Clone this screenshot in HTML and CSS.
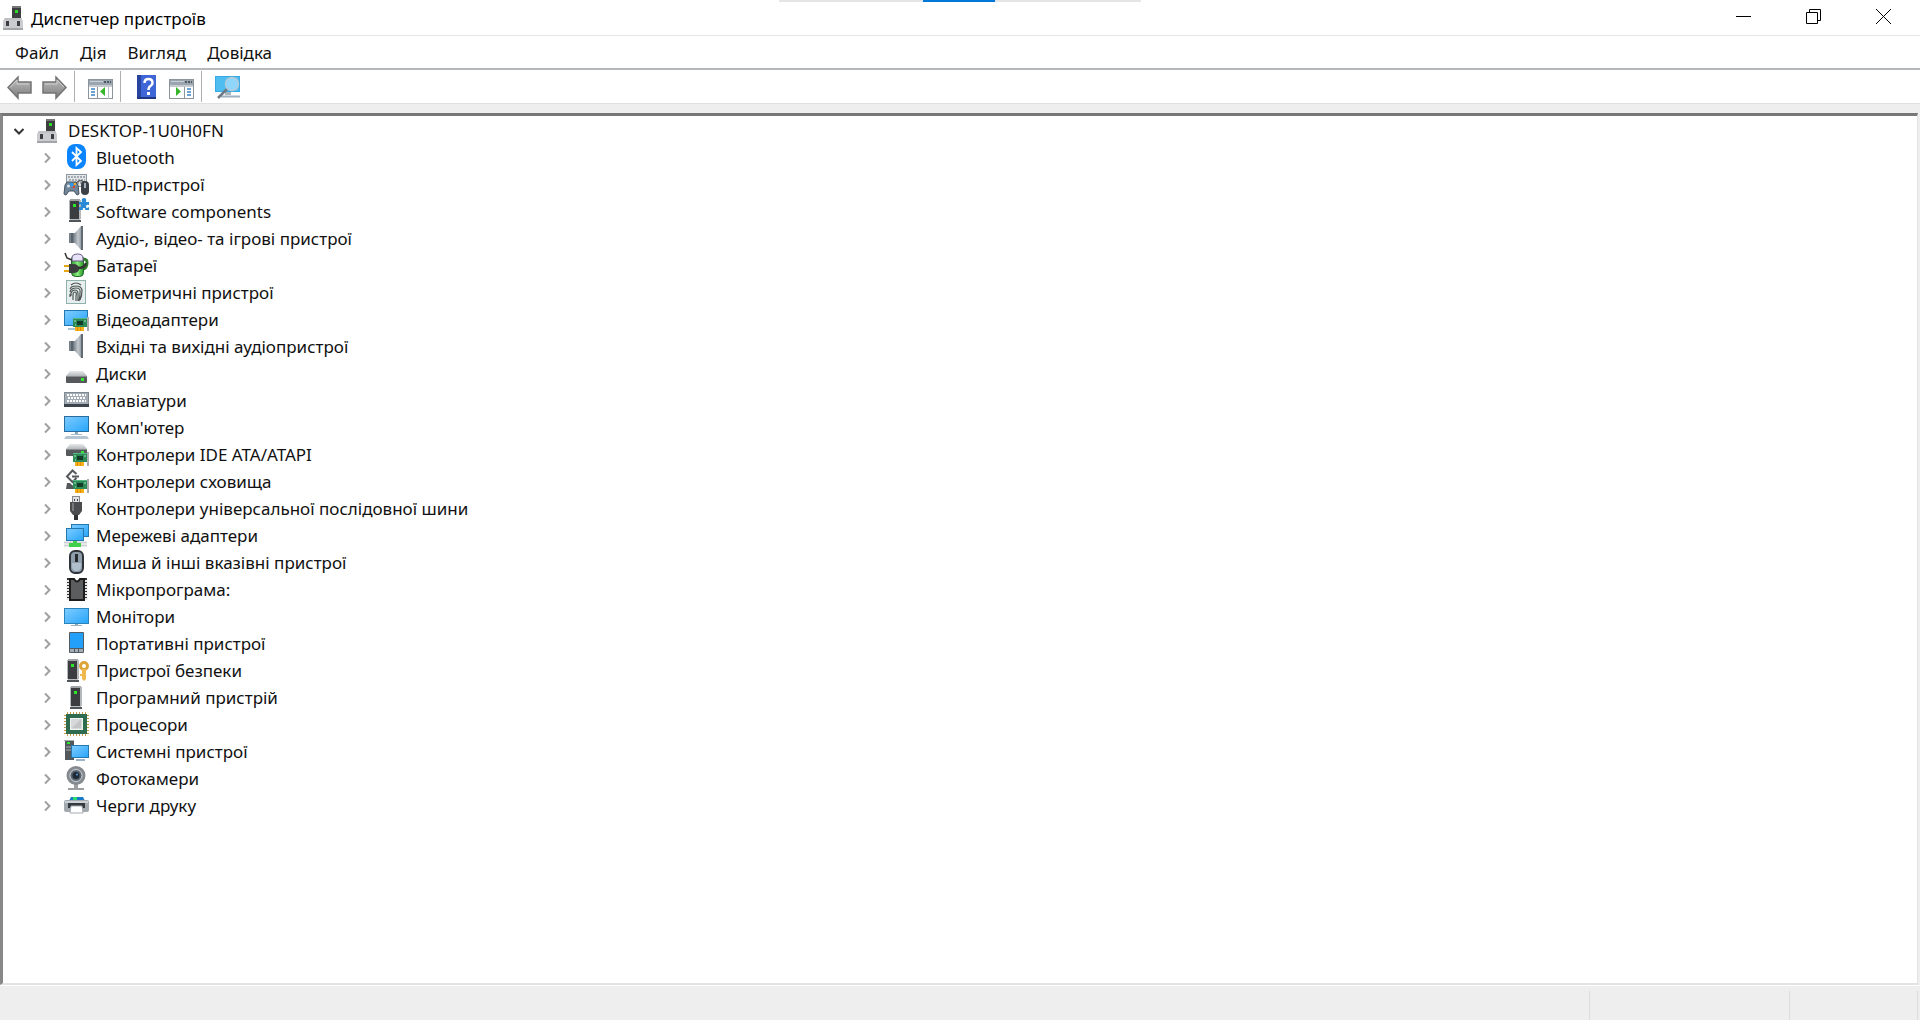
FILE: index.html
```html
<!DOCTYPE html>
<html lang="uk">
<head>
  <meta charset="UTF-8" />
  <meta name="viewport" content="width=device-width, initial-scale=1.0" />
  <title>Диспетчер пристроїв</title>
  <link rel="stylesheet" href="styles.css">
</head>
<body>
  <!-- Shared icon parts -->
  <svg class="defs" aria-hidden="true">
    <defs>
      <linearGradient id="blue" x1="0" y1="0" x2="1" y2="1"><stop offset="0" stop-color="#7fccff"/><stop offset="1" stop-color="#27a5fa"/></linearGradient>
      <linearGradient id="metal" x1="0" y1="0" x2="1" y2="0"><stop offset="0" stop-color="#6b757e"/><stop offset=".5" stop-color="#c3c9ce"/><stop offset="1" stop-color="#7b848c"/></linearGradient>
      <linearGradient id="gray" x1="0" y1="0" x2="0" y2="1"><stop offset="0" stop-color="#c0c0c0"/><stop offset="1" stop-color="#7d7d7d"/></linearGradient>
      <linearGradient id="light" x1="0" y1="0" x2="0" y2="1"><stop offset="0" stop-color="#e8eaeb"/><stop offset="1" stop-color="#b4b8bb"/></linearGradient>
      <linearGradient id="green" x1="0" y1="0" x2="1" y2="0"><stop offset="0" stop-color="#2c9a2c"/><stop offset=".5" stop-color="#8cec7e"/><stop offset="1" stop-color="#239323"/></linearGradient>
      <symbol id="arrow" viewBox="0 0 12 12"><path d="M3 1.500L7.500 6 3 10.500"/></symbol>
      <symbol id="root" viewBox="0 0 20 24">
        <rect x="9" y="0" width="9" height="13" fill="#3c3e40"/><rect x="9" y="0" width="9" height="2" fill="#777"/>
        <rect x="12" y="4" width="3" height="3" fill="#2bdc2b"/>
        <path d="M2 12h16l2 3v9H0v-9z" fill="#cbccd0"/><path d="M0 22h20v2H0z" fill="#a4a5a9"/><path d="M1 13h18" stroke="#b4b5b9"/>
        <rect x="3" y="15" width="3" height="5" fill="#3c3e42"/><rect x="14" y="15" width="3" height="5" fill="#3c3e42"/>
      </symbol>
      <symbol id="tower" viewBox="0 0 12 23">
        <path d="M1 0h10v20H1z" fill="#3b3d40"/><path d="M1 0h10v2H1z" fill="#a0a4a7"/><path d="M0 1h1v19H0zM10 1h2v19h-2z" fill="#b5b8ba"/>
        <rect x="4" y="5" width="3" height="3" fill="#29e629"/><path d="M1 20h10v1H1z" fill="#b8bcbe"/><path d="M0 21h12v2H0z" fill="#50555a"/>
      </symbol>
      <symbol id="card" viewBox="0 0 16 14">
        <path d="M14 0h2v14h-2z" fill="#a9adaf"/><rect x="0" y="1" width="14" height="9" fill="#2c8a57"/><path d="M0 1h14v1H0z" fill="#56b585"/>
        <rect x="4" y="4" width="6" height="4" fill="#123c28"/><path d="M2 3v2M12 3v2M2 8h1" stroke="#a9e0c1"/>
        <path d="M2 10h9v4H2z" fill="#f8b01a"/><path d="M4.500 10v4M7.500 10v4" stroke="#e08f00"/>
      </symbol>
      <symbol id="drive" viewBox="0 0 21 12">
        <path d="M4 0h13l4 5H0z" fill="url(#light)"/><rect x="0" y="5" width="21" height="7" rx="1" fill="#55595c"/>
        <path d="M1 5.500h19" stroke="#8a8e91"/><rect x="15" y="7" width="3" height="3" fill="#37e637"/>
      </symbol>
      <symbol id="speaker" viewBox="0 0 25 25">
        <path d="M5 7h6v10H5z" fill="#78828b"/><path d="M7 7h3v10H7z" fill="#59636c"/>
        <path d="M9 7h2l6-7h2v24h-2l-6-7H9z" fill="url(#metal)"/><path d="M18 0v24" stroke="#626b74" stroke-width="2"/>
      </symbol>
      <symbol id="panel" viewBox="0 0 25 20">
        <rect x=".5" y=".5" width="24" height="19" fill="#fff" stroke="#8b959e"/><path d="M1 1h23v5H1z" fill="#9aa5af"/>
        <path d="M2 2.500h13" stroke="#c8d0d7"/><path d="M16 3h2M19 3h2M22 3h1" stroke="#4d5963" stroke-width="2"/>
        <path d="M1 7h23" stroke="#c4cacf" stroke-width="2"/>
      </symbol>
    </defs>
  </svg>

  <div class="snap-tabs"><span></span></div>

  <header class="titlebar">
    <svg class="root-icon"><use href="#root"/></svg>
    <h1>Диспетчер пристроїв</h1>
    <div class="window-buttons">
      <button aria-label="Згорнути"><svg viewBox="0 0 15 15"><path d="M0 7.500h15"/></svg></button>
      <button aria-label="Відновити"><svg viewBox="0 0 15 15"><path d="M.5 3.500h11v11H.5zM3.500 3V.5h11v11H12"/></svg></button>
      <button aria-label="Закрити"><svg viewBox="0 0 15 15"><path d="M0 0l15 15M15 0L0 15"/></svg></button>
    </div>
  </header>

  <nav class="menu">
    <button>Файл</button>
    <button>Дія</button>
    <button>Вигляд</button>
    <button>Довідка</button>
  </nav>

  <div class="toolbar">
    <div class="group">
      <button aria-label="Назад"><svg viewBox="0 0 25 25"><path d="M1 12.500L11 2v5h13v11H11v5z" fill="url(#gray)" stroke="#747474" stroke-width="1.500"/><path d="M3 12.500L10 5v4h12" fill="none" stroke="#cfcfcf"/></svg></button>
      <button aria-label="Вперед"><svg viewBox="0 0 25 25"><path d="M24 12.500L14 2v5H1v11h13v5z" fill="url(#gray)" stroke="#747474" stroke-width="1.500"/><path d="M3 9h12V5l7 7" fill="none" stroke="#cfcfcf"/></svg></button>
    </div>
    <div class="group">
      <button aria-label="Дерево консолі"><svg viewBox="0 0 25 25"><use href="#panel" y="4" width="25" height="20"/><path d="M9.500 12v12" stroke="#8b959e"/><path d="M3 14h4M3 17h4M3 20h4" stroke="#3c82c4" stroke-width="1.500"/><path d="M17 12v9l-5-4.500z" fill="#35b528"/><path d="M20.500 12v12" stroke="#b9c1c8"/></svg></button>
    </div>
    <div class="group">
      <button aria-label="Довідка"><svg viewBox="0 0 25 25"><rect x="3" y="0" width="19" height="24" fill="#3f66d6"/><path d="M3 0h4v24H3z" fill="#27459f"/><path d="M3 22h19v2H3z" fill="#1e3780"/><path d="M10.500 8q0-4 4-4t4 4q0 2-2 3t-2 4" fill="none" stroke="#fff" stroke-width="2.500"/><path d="M13 17h3v3h-3z" fill="#fff"/></svg></button>
      <button aria-label="Панель дій"><svg viewBox="0 0 25 25"><use href="#panel" y="4" width="25" height="20"/><path d="M15.500 12v12" stroke="#8b959e"/><path d="M18 14h4M18 17h4M18 20h4" stroke="#3c82c4" stroke-width="1.500"/><path d="M7 12v9l5-4.500z" fill="#35b528"/></svg></button>
    </div>
    <div class="group">
      <button aria-label="Оновити конфігурацію обладнання"><svg viewBox="0 0 25 25"><path d="M0 1h25v16H0z" fill="#36a9e6"/><path d="M1 2h23v14H1z" fill="#4fbdf0"/><path d="M10 17h6v3h-6z" fill="#aab4bb"/><path d="M6 21.500h19" stroke="#9fb0bc" stroke-width="2"/><path d="M12 14l-9 9" stroke="#6f7b84" stroke-width="2.500"/><circle cx="17" cy="9" r="6.500" fill="#8fd6fa" stroke="#b5cbd9" stroke-width="1.500"/></svg></button>
    </div>
  </div>

  <main class="tree">
    <div class="row root-row">
      <svg class="arrow" viewBox="0 0 12 12"><path d="M1.500 4L6 8.500 10.500 4"/></svg>
      <svg class="root-icon"><use href="#root"/></svg>
      <span>DESKTOP-1U0H0FN</span>
    </div>
    <ul>
      <li class="row"><svg class="arrow"><use href="#arrow"/></svg><svg class="icon" viewBox="0 0 25 25"><rect x="3" y="-1" width="19" height="25" rx="8" fill="#0a84ff"/><path d="M8 7l9 9-4.500 4V3L17 7l-9 9" fill="none" stroke="#fff" stroke-width="1.800"/></svg><span>Bluetooth</span></li>
      <li class="row"><svg class="arrow"><use href="#arrow"/></svg><svg class="icon" viewBox="0 0 25 25"><rect x="2.500" y="2.500" width="20" height="12" fill="#e4e7ea" stroke="#8d979f"/><path d="M4 5h17M5 8h16M4 11h17" stroke="#8d979f" stroke-width="1.500" stroke-dasharray="2 1"/><path d="M3 10h9l2 3 1 9-2 1-3-4H5l-3 4-2-1 1-9z" fill="#71869a" stroke="#46525e"/><circle cx="4.500" cy="14" r="1.500" fill="#d7e4ef"/><path d="M6 11h3v3H6z" fill="#2a9af0"/><path d="M10 11h2v2h-2z" fill="#f0a726"/><path d="M9 14h2v2H9z" fill="#e64426"/><path d="M12 11q4-4 8-1" fill="none" stroke="#333"/><rect x="17" y="9" width="8" height="14" rx="4" fill="#3b4147"/><path d="M21 11v5" stroke="#a9b5c0" stroke-width="2"/></svg><span>HID-пристрої</span></li>
      <li class="row"><svg class="arrow"><use href="#arrow"/></svg><svg class="icon" viewBox="0 0 25 25"><use href="#tower" x="5" width="12" height="23"/><path d="M15 3h3q-1-4 2-4t2 4h3v3q-3-1-3 1.500T25 8v3h-4q1-2-1-2t-1 2h-4V8q2 1 2-1.500T15 6z" fill="#2b8ad6"/></svg><span>Software components</span></li>
      <li class="row"><svg class="arrow"><use href="#arrow"/></svg><svg class="icon"><use href="#speaker"/></svg><span>Аудіо-, відео- та ігрові пристрої</span></li>
      <li class="row"><svg class="arrow"><use href="#arrow"/></svg><svg class="icon" viewBox="0 0 25 25"><path d="M19 6q5 0 4 5t-4 5" fill="none" stroke="#2f7d2a" stroke-width="3"/><rect x="7.500" y="2.500" width="12" height="21" rx="4" fill="url(#green)" stroke="#24632a"/><path d="M8 5q0-4 5.500-4T19 5v3H8z" fill="#e7e2f6" stroke="#665c86"/><path d="M1 0l2 5 5 2" fill="none" stroke="#333" stroke-width="1.500"/><path d="M0 13h6M0 18h6" stroke="#e5a616" stroke-width="2"/><path d="M5 11h4q6 0 6 4.500T9 20H5z" fill="#3b3d3f"/><path d="M14 15q7 0 8-5" fill="none" stroke="#333" stroke-width="2.500"/></svg><span>Батареї</span></li>
      <li class="row"><svg class="arrow"><use href="#arrow"/></svg><svg class="icon" viewBox="0 0 25 25"><rect x="2.500" y=".5" width="19" height="23" fill="#e6efed" stroke="#8fb3ac"/><g fill="none" stroke="#4d5352" stroke-width="1.200"><path d="M7 5q5-4 10 0M6 9q1-3 6-3t6 4q0 6-2 10M6 12q1-4 6-4t4 5q0 4-1 8M7 16v-3q1-3 4-3t3 4v7M9 20v-5q0-3 2-3t1 4v5M6 14v3"/></g></svg><span>Біометричні пристрої</span></li>
      <li class="row"><svg class="arrow"><use href="#arrow"/></svg><svg class="icon" viewBox="0 0 25 25"><rect x=".5" y="3.500" width="23" height="15" fill="url(#blue)" stroke="#2578ae"/><path d="M4 22h7" stroke="#a9c4d6" stroke-width="2"/><use href="#card" x="9" y="10" width="16" height="14"/></svg><span>Відеоадаптери</span></li>
      <li class="row"><svg class="arrow"><use href="#arrow"/></svg><svg class="icon"><use href="#speaker"/></svg><span>Вхідні та вихідні аудіопристрої</span></li>
      <li class="row"><svg class="arrow"><use href="#arrow"/></svg><svg class="icon" viewBox="0 0 25 25"><use href="#drive" x="2" y="10" width="21" height="12"/></svg><span>Диски</span></li>
      <li class="row"><svg class="arrow"><use href="#arrow"/></svg><svg class="icon" viewBox="0 0 25 25"><rect x=".5" y="4.500" width="24" height="14" fill="#a4adb5" stroke="#7f8991"/><path d="M3 7h19M4 10h18M3 13h19" stroke="#fff" stroke-width="2" stroke-dasharray="2 1"/><path d="M0 16h25v3H0z" fill="#3d454c"/></svg><span>Клавіатури</span></li>
      <li class="row"><svg class="arrow"><use href="#arrow"/></svg><svg class="icon" viewBox="0 0 25 25"><rect x=".5" y="1.500" width="24" height="15" fill="url(#blue)" stroke="#2a6d9c"/><path d="M11 17h3v2h-3z" fill="#8da6b6"/><path d="M7 19.500h11" stroke="#a5bccb"/><path d="M2 21h21l2 3H0z" fill="#b5c6d2"/></svg><span>Комп'ютер</span></li>
      <li class="row"><svg class="arrow"><use href="#arrow"/></svg><svg class="icon" viewBox="0 0 25 25"><use href="#drive" x="2" y="2" width="21" height="12"/><use href="#card" x="9" y="10" width="16" height="14"/></svg><span>Контролери IDE ATA/ATAPI</span></li>
      <li class="row"><svg class="arrow"><use href="#arrow"/></svg><svg class="icon" viewBox="0 0 25 25"><path d="M3 14h10v6H2z" fill="#55595c"/><path d="M12.500 5L8.500 1.500 3 7.500l5.500 5.500 4-4" fill="none" stroke="#fff" stroke-width="5"/><path d="M12.500 5L8.500 1.500 3 7.500l5.500 5.500 4-4M15 7.500H8" fill="none" stroke="#55595c" stroke-width="2"/><use href="#card" x="9" y="10" width="16" height="14"/></svg><span>Контролери сховища</span></li>
      <li class="row"><svg class="arrow"><use href="#arrow"/></svg><svg class="icon" viewBox="0 0 25 25"><rect x="8.500" y=".5" width="7" height="6" fill="#dfe0e1" stroke="#85898c"/><path d="M10 3h1v2h-1zM13 3h1v2h-1z" fill="#444"/><path d="M6 6h12v9l-3 4H9l-3-4z" fill="#4a4c4e"/><path d="M8 7h2v8H8z" fill="#777a7d"/><path d="M10 19h4v5h-4z" fill="#303234"/></svg><span>Контролери універсальної послідовної шини</span></li>
      <li class="row"><svg class="arrow"><use href="#arrow"/></svg><svg class="icon" viewBox="0 0 25 25"><rect x="7.500" y="1.500" width="17" height="12" fill="url(#blue)" stroke="#2578ae"/><path d="M0 19.500h23M0 22.500h23" stroke="#cfd2d4" stroke-width="2"/><path d="M9 18h4v2h4v4H5v-4h4z" fill="#42cf49"/><rect x="2.500" y="5.500" width="17" height="12" fill="url(#blue)" stroke="#2578ae"/></svg><span>Мережеві адаптери</span></li>
      <li class="row"><svg class="arrow"><use href="#arrow"/></svg><svg class="icon" viewBox="0 0 25 25"><rect x="6" y="1" width="13" height="22" rx="5" fill="#8e9dac" stroke="#303439" stroke-width="2"/><path d="M8 13v3q0 5 4.500 5t4.500-5v-3" fill="#b1bfcc"/><path d="M12.500 4v8" stroke="#272a2d" stroke-width="3"/></svg><span>Миша й інші вказівні пристрої</span></li>
      <li class="row"><svg class="arrow"><use href="#arrow"/></svg><svg class="icon" viewBox="0 0 25 25"><path d="M3 1h5v22H3zM18 1h5v22h-5z" fill="#333"/><path d="M4 3v20M22 3v20" stroke="#e8e8e8" stroke-width="3" stroke-dasharray="2 1"/><path d="M6 2h4q3 5 6 0h4v21H6z" fill="#5b5d5f" stroke="#1c1c1c" stroke-width="2"/></svg><span>Мікропрограма:</span></li>
      <li class="row"><svg class="arrow"><use href="#arrow"/></svg><svg class="icon" viewBox="0 0 25 25"><rect x=".5" y="4.500" width="24" height="15" fill="url(#blue)" stroke="#2a83bb"/><path d="M11 20h3v1h-3z" fill="#8da6b6"/><path d="M7 21.500h11" stroke="#9bb3c3"/></svg><span>Монітори</span></li>
      <li class="row"><svg class="arrow"><use href="#arrow"/></svg><svg class="icon" viewBox="0 0 25 25"><rect x="5" y="1" width="15" height="21" rx="1" fill="#535c64"/><rect x="6" y="2" width="13" height="15" fill="#22a0fa"/><path d="M6 19.500h4M11 19.500h3M15 19.500h4" stroke="#a2acb4" stroke-width="3"/></svg><span>Портативні пристрої</span></li>
      <li class="row"><svg class="arrow"><use href="#arrow"/></svg><svg class="icon" viewBox="0 0 25 25"><use href="#tower" x="3" y="1" width="12" height="23"/><circle cx="20" cy="8" r="3.500" fill="none" stroke="#dda43a" stroke-width="3"/><path d="M18 11h4v10l-2 2-2-2v-3h-2v-2h2z" fill="#eeb84c"/></svg><span>Пристрої безпеки</span></li>
      <li class="row"><svg class="arrow"><use href="#arrow"/></svg><svg class="icon" viewBox="0 0 25 25"><use href="#tower" x="6" y="1" width="12" height="23"/></svg><span>Програмний пристрій</span></li>
      <li class="row"><svg class="arrow"><use href="#arrow"/></svg><svg class="icon" viewBox="0 0 25 25"><path d="M3 1h19M3 23h19M1 3v19M24 3v19" stroke="#c79a45" stroke-width="2" stroke-dasharray="1 2"/><rect x="2" y="2" width="21" height="20" fill="#2f6b4f"/><rect x="6.500" y="6.500" width="12" height="11" fill="#d8d9d9" stroke="#eff3f1"/><path d="M8 16L17 7v9z" fill="#c4c5c6"/></svg><span>Процесори</span></li>
      <li class="row"><svg class="arrow"><use href="#arrow"/></svg><svg class="icon" viewBox="0 0 25 25"><rect x="1" y="1" width="9" height="20" fill="#53585c"/><path d="M0 1h10v1H0z" fill="#a9adaf"/><path d="M2 8h7M2 11h7" stroke="#a9adaf"/><rect x="3" y="3" width="3" height="2" fill="#2be62b"/><rect x="7.500" y="6.500" width="17" height="12" fill="url(#blue)" stroke="#2578ae"/><path d="M12 21h9" stroke="#9bb3c3" stroke-width="2"/></svg><span>Системні пристрої</span></li>
      <li class="row"><svg class="arrow"><use href="#arrow"/></svg><svg class="icon" viewBox="0 0 25 25"><path d="M10 17h4v5h6v2H4v-2h6z" fill="#9da0a2"/><circle cx="12" cy="9.500" r="8.500" fill="#8a9299" stroke="#85898d" stroke-width="2"/><circle cx="12" cy="9.500" r="6" fill="#5a646e" stroke="#cbd0d4"/><circle cx="12" cy="9.500" r="3.500" fill="#1d2935"/><circle cx="13" cy="8.500" r="1" fill="#5ea0df"/></svg><span>Фотокамери</span></li>
      <li class="row"><svg class="arrow"><use href="#arrow"/></svg><svg class="icon" viewBox="0 0 25 25"><path d="M5 8l2-4h12l2 4z" fill="#1779c8"/><path d="M9 4h4v4H9z" fill="#2ddb73"/><rect x="0" y="7" width="25" height="12" rx="2" fill="#a2a9af"/><path d="M1 8h23v2H1z" fill="#cdd2d6"/><rect x="4" y="10" width="17" height="5" fill="#34393d"/><path d="M7 13h11l1 7H6z" fill="#fff" stroke="#a5adb4"/></svg><span>Черги друку</span></li>
    </ul>
  </main>

  <footer class="status">
    <div></div>
    <div></div>
    <div></div>
  </footer>
</body>
</html>
```
FILE: styles.css
```css
* { box-sizing: border-box; }
body {
  margin: 0;
  min-height: 100vh;
  display: flex;
  flex-direction: column;
  background: #eee;
  color: #111;
  font-family: "Noto Sans", "Open Sans", sans-serif;
  font-size: 17px;
  line-height: 24px;
}
svg { display: block; flex: none; }
button {
  padding: 0;
  border: none;
  background: none;
  color: inherit;
  font: inherit;
}
.defs {
  position: absolute;
  width: 0;
  height: 0;
}
.snap-tabs {
  position: absolute;
  top: 0;
  left: 50%;
  width: 362px;
  height: 2px;
  margin-left: -181px;
  background: #e5e5e5;
}
.snap-tabs span {
  display: block;
  width: 72px;
  height: 2px;
  margin-left: 144px;
  background: #0078d7;
}
.titlebar {
  display: flex;
  align-items: center;
  gap: 8px;
  height: 35px;
  padding-left: 3px;
  background: #fff;
}
.titlebar h1 {
  flex: 1;
  margin: 0;
  padding-top: 2px;
  font-size: 17px;
  font-weight: normal;
  color: #000;
}
.root-icon {
  width: 20px;
  height: 24px;
}
.window-buttons {
  display: flex;
  align-self: flex-start;
  padding-right: 2px;
}
.window-buttons button {
  display: flex;
  align-items: center;
  justify-content: center;
  width: 70px;
  height: 33px;
}
.window-buttons svg {
  width: 15px;
  height: 15px;
  fill: none;
  stroke: #000;
}
.menu {
  display: flex;
  gap: 21px;
  height: 35px;
  padding: 2px 0 0 15px;
  background: #fff;
  border-top: 1px solid #e5e5e5;
  border-bottom: 2px solid #b4b8bb;
}
.toolbar {
  display: flex;
  align-items: center;
  height: 34px;
  padding-left: 7px;
  background: #fff;
  border-bottom: 1px solid #e0e0e0;
}
.group {
  display: flex;
  gap: 10px;
  padding: 4px 7px 2px 0;
}
.group + .group {
  padding-left: 13px;
  border-left: 1px solid #b0b0b0;
}
.group svg {
  width: 25px;
  height: 25px;
}
.tree {
  flex: 1;
  margin: 9px 2px 0 0;
  padding-top: 1px;
  background: #fff;
  border-top: 3px solid #777;
  border-left: 3px solid #888;
  border-right: 1px solid #e3e3e3;
  border-bottom: 2px solid #e3e3e3;
}
.tree ul {
  margin: 0;
  padding: 0;
  list-style: none;
}
.row {
  display: flex;
  align-items: center;
  height: 27px;
  padding-left: 39px;
}
.root-row { padding-left: 10px; }
.arrow {
  width: 12px;
  height: 12px;
  margin-right: 10px;
  fill: none;
  stroke: #a0a0a0;
  stroke-width: 2;
}
.root-row .arrow {
  margin-right: 12px;
  stroke: #333;
}
.icon {
  width: 25px;
  height: 25px;
  margin-right: 7px;
  overflow: visible;
}
.row .root-icon { margin-right: 11px; }
.status {
  display: flex;
  height: 35px;
  padding-top: 5px;
  border-top: 1px solid #fff;
}
.status div {
  width: 200px;
  border-right: 1px solid #dcdcdc;
}
.status div:first-child { flex: 1; }
.status div:last-child {
  width: 128px;
  margin-right: 2px;
}
```
